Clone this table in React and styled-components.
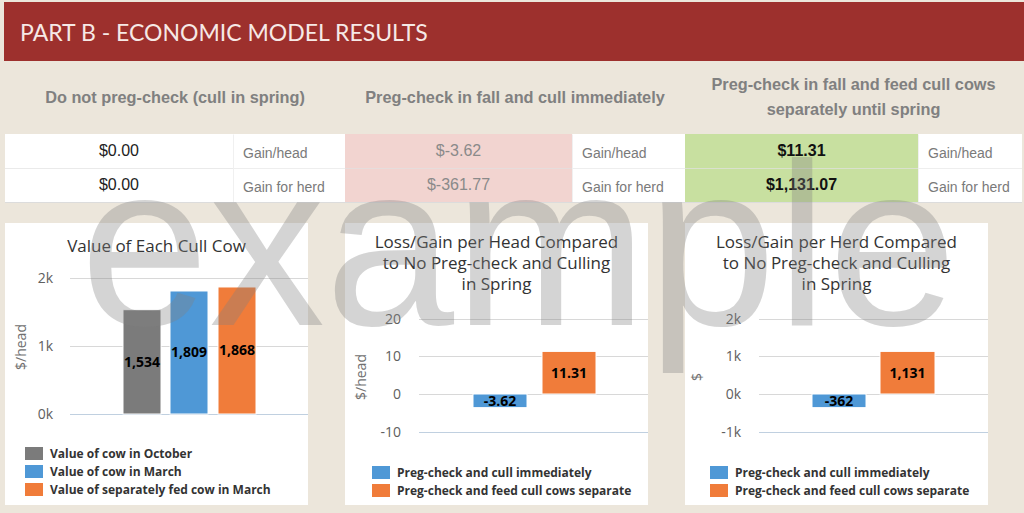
import React from 'react';
import styled, { createGlobalStyle } from 'styled-components';

const GlobalStyle = createGlobalStyle`
    html, body {
        margin: 0;
        padding: 0;
        background: #ece6db;
    }
`;

const COLORS = {
    gray: '#7b7b7b',
    blue: '#4f98d6',
    orange: '#f07c3a',
};

const Page = styled.div`
    position: relative;
    width: 1024px;
    height: 513px;
    overflow: hidden;
    padding: 2px 0 0 4px;
    box-sizing: border-box;
    background: #ece6db;
`;

const Banner = styled.div`
    height: 59px;
    background: #9d302d;
    display: flex;
    align-items: center;
    padding-left: 16px;
`;

const BannerTitle = styled.h1`
    margin: 0;
    font-family: Lato, "Open Sans", sans-serif;
    font-weight: 400;
    font-size: 23px;
    color: #f6e9e6;
`;

const Table = styled.div`
    display: grid;
    grid-template-columns: 228px 112px 227px 113px 233px 104px;
    margin-left: 1px;
    font-family: "Liberation Sans", Arial, sans-serif;
    border-bottom: 1px solid #dcdcdc;
    width: 1017px;
`;

const HeadCell = styled.div`
    grid-column: span 2;
    height: 72px;
    display: flex;
    align-items: center;
    justify-content: center;
    text-align: center;
    font-weight: 700;
    font-size: 16.3px;
    line-height: 25px;
    color: #808080;
    padding-bottom: 1px;
`;

const TONES = {
    plain: { bg: '#ffffff', color: '#222222', weight: 400 },
    loss: { bg: '#f2d4d0', color: '#8a8a8a', weight: 400 },
    gain: { bg: '#c8e0a0', color: '#111111', weight: 700 },
};

const ValueCell = styled.div`
    height: 34px;
    display: flex;
    align-items: center;
    justify-content: center;
    font-size: 16px;
    background: ${p => TONES[p.$tone].bg};
    color: ${p => TONES[p.$tone].color};
    font-weight: ${p => TONES[p.$tone].weight};
    border-top: 1px solid ${p => (p.$first ? 'transparent' : 'rgba(225,225,225,0.7)')};
    box-sizing: border-box;
    padding-bottom: 2px;
`;

const LabelCell = styled.div`
    height: 34px;
    display: flex;
    align-items: center;
    padding-left: 9px;
    font-size: 14px;
    color: #7a7a7a;
    background: #fff;
    border-top: 1px solid ${p => (p.$first ? 'transparent' : '#eeeeee')};
    border-left: 1px solid #f0f0f0;
    box-sizing: border-box;
    padding-top: 2px;
`;

const ChartRow = styled.div`
    display: grid;
    grid-template-columns: 340px 340px 340px;
    margin-top: 20px;
    margin-left: 1px;
`;

const Card = styled.div`
    width: 303px;
    height: 282px;
    background: #fff;
    box-sizing: border-box;
    padding-top: ${p => p.$pt}px;
    display: flex;
    flex-direction: column;
`;

const ChartTitle = styled.div`
    font-family: "Open Sans", sans-serif;
    font-size: 17px;
    line-height: 21px;
    color: #333;
    text-align: center;
`;

const PlotSvg = styled.svg`
    display: block;
    font-family: "Open Sans", sans-serif;

    .tick {
        font-size: 14px;
        fill: #606060;
    }
    .axis-title {
        font-size: 14px;
        fill: #707070;
    }
    .bar-label {
        font-size: 14px;
        font-weight: 700;
        fill: #000;
    }
`;

const Legend = styled.div`
    margin-top: ${p => p.$mt}px;
    padding-left: ${p => p.$pl}px;
    display: flex;
    flex-direction: column;
`;

const LegendItem = styled.div`
    height: 18px;
    display: flex;
    align-items: center;
    gap: 7px;
    font-family: "Open Sans", sans-serif;
    font-size: 12px;
    font-weight: 700;
    color: #333;
`;

const Swatch = styled.span`
    width: 18px;
    height: 13px;
    background: ${p => p.$color};
`;

const Watermark = styled.div`
    position: absolute;
    left: 80px;
    top: 129px;
    font-family: "Liberation Sans", Arial, sans-serif;
    font-size: 232px;
    line-height: 1;
    color: rgba(128, 128, 128, 0.34);
    pointer-events: none;
    white-space: nowrap;
`;

function Plot({ height, zero, scale, ticks, bars, axisTitle, titleX, titleY, plotLeft, labelRight }) {
    const y = v => zero - v * scale;
    return (
        <PlotSvg width="303" height={height}>
            {ticks.map((t, i) => (
                <g key={t.label}>
                    <line
                        x1={plotLeft}
                        x2={303}
                        y1={Math.round(y(t.v)) + 0.5}
                        y2={Math.round(y(t.v)) + 0.5}
                        stroke={i === ticks.length - 1 ? '#c0d0e0' : '#d8d8d8'}
                        strokeWidth="1"
                    />
                    <text className="tick" x={labelRight} y={y(t.v) + 5} textAnchor="end">{t.label}</text>
                </g>
            ))}
            <text
                className="axis-title"
                x={titleX}
                y={titleY}
                textAnchor="middle"
                transform={`rotate(-90 ${titleX} ${titleY})`}
                dominantBaseline="middle"
            >
                {axisTitle}
            </text>
            {bars.map(b => {
                const top = Math.min(y(b.v), y(0));
                const h = Math.abs(y(b.v) - y(0));
                return (
                    <g key={b.label}>
                        <rect x={b.x} y={top} width={b.w} height={h} fill={b.color} stroke="#fff" strokeWidth="1" />
                        <text className="bar-label" x={b.x + b.w / 2} y={top + h / 2 + 5} textAnchor="middle">{b.label}</text>
                    </g>
                );
            })}
        </PlotSvg>
    );
}

const legendImmediate = [
    { color: COLORS.blue, text: 'Preg-check and cull immediately' },
    { color: COLORS.orange, text: 'Preg-check and feed cull cows separate' },
];

function ChartCard({ pt, title, plot, legend, legendMt, legendPl }) {
    return (
        <Card $pt={pt}>
            <ChartTitle>{title}</ChartTitle>
            <Plot {...plot} />
            <Legend $mt={legendMt} $pl={legendPl}>
                {legend.map(l => (
                    <LegendItem key={l.text}>
                        <Swatch $color={l.color} />
                        {l.text}
                    </LegendItem>
                ))}
            </Legend>
        </Card>
    );
}

export default function App() {
    return (
        <Page>
            <GlobalStyle />
            <Banner>
                <BannerTitle>PART B - ECONOMIC MODEL RESULTS</BannerTitle>
            </Banner>

            <Table>
                <HeadCell>Do not preg-check (cull in spring)</HeadCell>
                <HeadCell>Preg-check in fall and cull immediately</HeadCell>
                <HeadCell>Preg-check in fall and feed cull cows<br />separately until spring</HeadCell>

                <ValueCell $tone="plain" $first>$0.00</ValueCell>
                <LabelCell $first>Gain/head</LabelCell>
                <ValueCell $tone="loss" $first>$-3.62</ValueCell>
                <LabelCell $first>Gain/head</LabelCell>
                <ValueCell $tone="gain" $first>$11.31</ValueCell>
                <LabelCell $first>Gain/head</LabelCell>

                <ValueCell $tone="plain">$0.00</ValueCell>
                <LabelCell>Gain for herd</LabelCell>
                <ValueCell $tone="loss">$-361.77</ValueCell>
                <LabelCell>Gain for herd</LabelCell>
                <ValueCell $tone="gain">$1,131.07</ValueCell>
                <LabelCell>Gain for herd</LabelCell>
            </Table>

            <ChartRow>
                <ChartCard
                    pt={12}
                    title="Value of Each Cull Cow"
                    plot={{
                        height: 180,
                        zero: 158,
                        scale: 0.068,
                        plotLeft: 65,
                        labelRight: 48,
                        axisTitle: '$/head',
                        titleX: 17,
                        titleY: 91,
                        ticks: [
                            { v: 2000, label: '2k' },
                            { v: 1000, label: '1k' },
                            { v: 0, label: '0k' },
                        ],
                        bars: [
                            { x: 118, w: 38, v: 1534, color: COLORS.gray, label: '1,534' },
                            { x: 165, w: 38, v: 1809, color: COLORS.blue, label: '1,809' },
                            { x: 213, w: 38, v: 1868, color: COLORS.orange, label: '1,868' },
                        ],
                    }}
                    legend={[
                        { color: COLORS.gray, text: 'Value of cow in October' },
                        { color: COLORS.blue, text: 'Value of cow in March' },
                        { color: COLORS.orange, text: 'Value of separately fed cow in March' },
                    ]}
                    legendMt={8}
                    legendPl={20}
                />
                <ChartCard
                    pt={8}
                    title={<>Loss/Gain per Head Compared<br />to No Preg-check and Culling<br />in Spring</>}
                    plot={{
                        height: 166,
                        zero: 100,
                        scale: 3.767,
                        plotLeft: 74,
                        labelRight: 56,
                        axisTitle: '$/head',
                        titleX: 17,
                        titleY: 83,
                        ticks: [
                            { v: 20, label: '20' },
                            { v: 10, label: '10' },
                            { v: 0, label: '0' },
                            { v: -10, label: '-10' },
                        ],
                        bars: [
                            { x: 128, w: 54, v: -3.62, color: COLORS.blue, label: '-3.62' },
                            { x: 197, w: 54, v: 11.31, color: COLORS.orange, label: '11.31' },
                        ],
                    }}
                    legend={legendImmediate}
                    legendMt={3}
                    legendPl={27}
                />
                <ChartCard
                    pt={8}
                    title={<>Loss/Gain per Herd Compared<br />to No Preg-check and Culling<br />in Spring</>}
                    plot={{
                        height: 166,
                        zero: 100,
                        scale: 0.03767,
                        plotLeft: 74,
                        labelRight: 56,
                        axisTitle: '$',
                        titleX: 13,
                        titleY: 83,
                        ticks: [
                            { v: 2000, label: '2k' },
                            { v: 1000, label: '1k' },
                            { v: 0, label: '0k' },
                            { v: -1000, label: '-1k' },
                        ],
                        bars: [
                            { x: 127, w: 54, v: -362, color: COLORS.blue, label: '-362' },
                            { x: 195, w: 55, v: 1131, color: COLORS.orange, label: '1,131' },
                        ],
                    }}
                    legend={legendImmediate}
                    legendMt={3}
                    legendPl={25}
                />
            </ChartRow>

            <Watermark>example</Watermark>
        </Page>
    );
}
